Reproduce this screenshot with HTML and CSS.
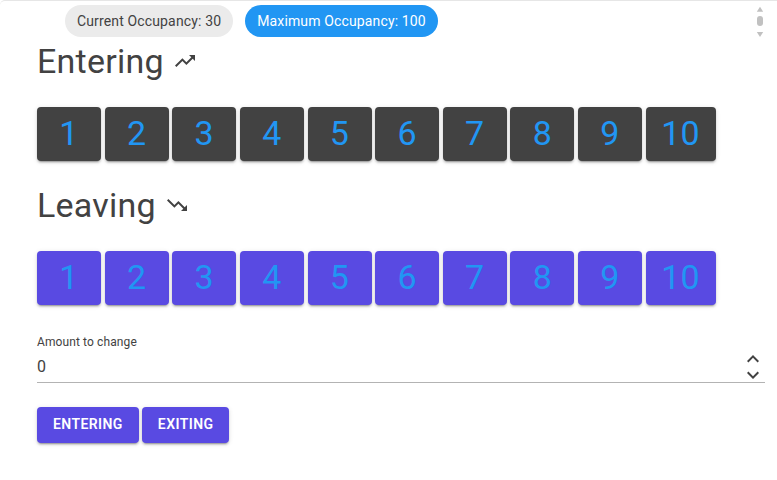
FILE: index.html
```
<!DOCTYPE html>
<html lang="en">
<head>
<meta charset="utf-8">
<title>Occupancy</title>
<link rel="stylesheet" href="styles.css">
</head>
<body>
<div class="panel">
  <div class="chips">
    <span class="chip">Current Occupancy: 30</span>
    <span class="chip chip-info">Maximum Occupancy: 100</span>
  </div>
  <svg class="scroller" width="8" height="32" viewBox="0 0 8 32"><path d="M.8 5.8 4 .8l3.2 5z"/><rect x="1" y="10" width="6" height="10" rx="3"/><path d="M.8 26h6.4L4 31z"/></svg>
  <h4>Entering <svg class="trend" viewBox="0 0 24 24"><path d="M16 6l2.29 2.29-4.88 4.88-4-4L2 16.59 3.41 18l6-6 4 4 6.3-6.29L22 12V6z"/></svg></h4>
  <div class="numbers dark">
    <button>1</button><button>2</button><button>3</button><button>4</button><button>5</button><button>6</button><button>7</button><button>8</button><button>9</button><button>10</button>
  </div>
  <h4>Leaving <svg class="trend" viewBox="0 0 24 24"><path d="M16 18l2.29-2.29-4.88-4.88-4 4L2 7.41 3.41 6l6 6 4-4 6.3 6.29L22 12v6z"/></svg></h4>
  <div class="numbers primary">
    <button>1</button><button>2</button><button>3</button><button>4</button><button>5</button><button>6</button><button>7</button><button>8</button><button>9</button><button>10</button>
  </div>
  <div class="field">
    <div class="label">Amount to change</div>
    <div class="control">
      <span>0</span>
      <div class="spin">
        <svg viewBox="0 4 24 16"><path d="M12 8l-6 6 1.41 1.41L12 10.83l4.59 4.58L18 14z"/></svg>
        <svg viewBox="0 4 24 16"><path d="M16.59 8.59L12 13.17 7.41 8.59 6 10l6 6 6-6z"/></svg>
      </div>
    </div>
  </div>
  <div class="actions"><button>Entering</button><button>Exiting</button></div>
</div>
</body>
</html>
```
FILE: styles.css
```
* { box-sizing: border-box; }
body {
  margin: 0;
  background: #fff;
  color: #424242;
  font-family: Roboto, sans-serif;
  overflow: hidden;
}
.panel {
  position: relative;
  height: 480px;
  padding: 4px 12px 0 37px;
  border-top: 1px solid #e6e6e6;
  border-top-left-radius: 5px;
}
.chips { display: flex; gap: 12px; padding-left: 28px; }
.chip {
  height: 32px;
  padding: 0 12px;
  border-radius: 16px;
  background: #ebebeb;
  font-size: 14px;
  line-height: 32px;
  letter-spacing: .143px;
  white-space: nowrap;
}
.chip-info { background: #2196f3; color: #fff; }
.scroller { position: absolute; left: 756px; top: 5px; fill: #c1c1c1; }
h4 {
  display: flex;
  align-items: center;
  gap: 9px;
  height: 42px;
  margin: 3px 0 25px;
  font-size: 34px;
  font-weight: 400;
  line-height: 42px;
  letter-spacing: .25px;
}
.trend { width: 24px; height: 24px; fill: #424242; }
.numbers { display: flex; gap: 3.64px; margin-bottom: 23px; }
button {
  border: 0;
  border-radius: 4px;
  font-family: inherit;
  box-shadow: 0 3px 1px -2px rgba(0,0,0,.2), 0 2px 2px 0 rgba(0,0,0,.14), 0 1px 5px 0 rgba(0,0,0,.12);
}
.numbers button {
  min-width: 64px;
  height: 54px;
  padding: 0 16px 2px;
  color: #2196f3;
  font-size: 34px;
  line-height: 42px;
  letter-spacing: .25px;
}
.numbers button:last-child { width: 70px; padding: 0 0 2px; }
.dark button { background: #424242; }
.primary button, .actions button { background: #594ae2; }
.field { margin-top: 29px; border-bottom: 1px solid #b3b3b3; height: 49px; }
.label { font-size: 12px; line-height: 16px; letter-spacing: .11px; }
.control { display: flex; justify-content: space-between; height: 32px; font-size: 16px; line-height: 34px; }
.spin { display: flex; flex-direction: column; width: 24px; margin-top: 1px; }
.spin svg { flex: none; width: 24px; height: 16px; fill: #424242; }
.actions { display: flex; gap: 3px; margin-top: 24px; }
.actions button {
  height: 36px;
  padding: 0 16px 2px;
  color: #fff;
  font-size: 14px;
  font-weight: 600;
  letter-spacing: .42px;
  text-transform: uppercase;
}
```
